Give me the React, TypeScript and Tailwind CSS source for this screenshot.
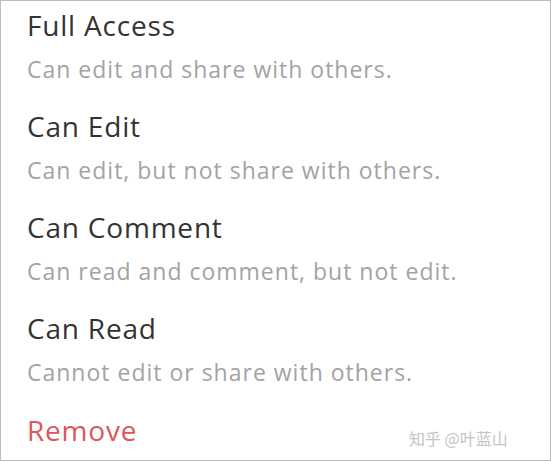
const options = [
  { title: "Full Access", desc: "Can edit and share with others." },
  { title: "Can Edit", desc: "Can edit, but not share with others." },
  { title: "Can Comment", desc: "Can read and comment, but not edit." },
  { title: "Can Read", desc: "Cannot edit or share with others." },
];

export default function App() {
  return (
    <div
      className="relative w-[551px] h-[461px] bg-white border border-[#bcbcbc] pl-[26px]"
      style={{ fontFamily: '"Open Sans", "Noto Sans", sans-serif' }}
    >
      {options.map((o) => (
        <div key={o.title} className="pt-[4px] pb-[16px]">
          <p className="text-[28px] leading-[40px] tracking-[0.8px] text-[#333333]">{o.title}</p>
          <p className="mt-[7px] text-[23px] leading-[34px] tracking-[1px] text-[#a3a3a3]">{o.desc}</p>
        </div>
      ))}
      <div className="pt-[5px]">
        <p className="text-[28px] leading-[40px] tracking-[0.8px] text-[#e0545c]">Remove</p>
      </div>
      <span
        className="absolute left-[408px] top-[425px] text-[16px] text-[#c4c4c4]"
        style={{ fontFamily: '"Noto Sans CJK SC", sans-serif' }}
      >
        知乎 @叶蓝山
      </span>
    </div>
  );
}
